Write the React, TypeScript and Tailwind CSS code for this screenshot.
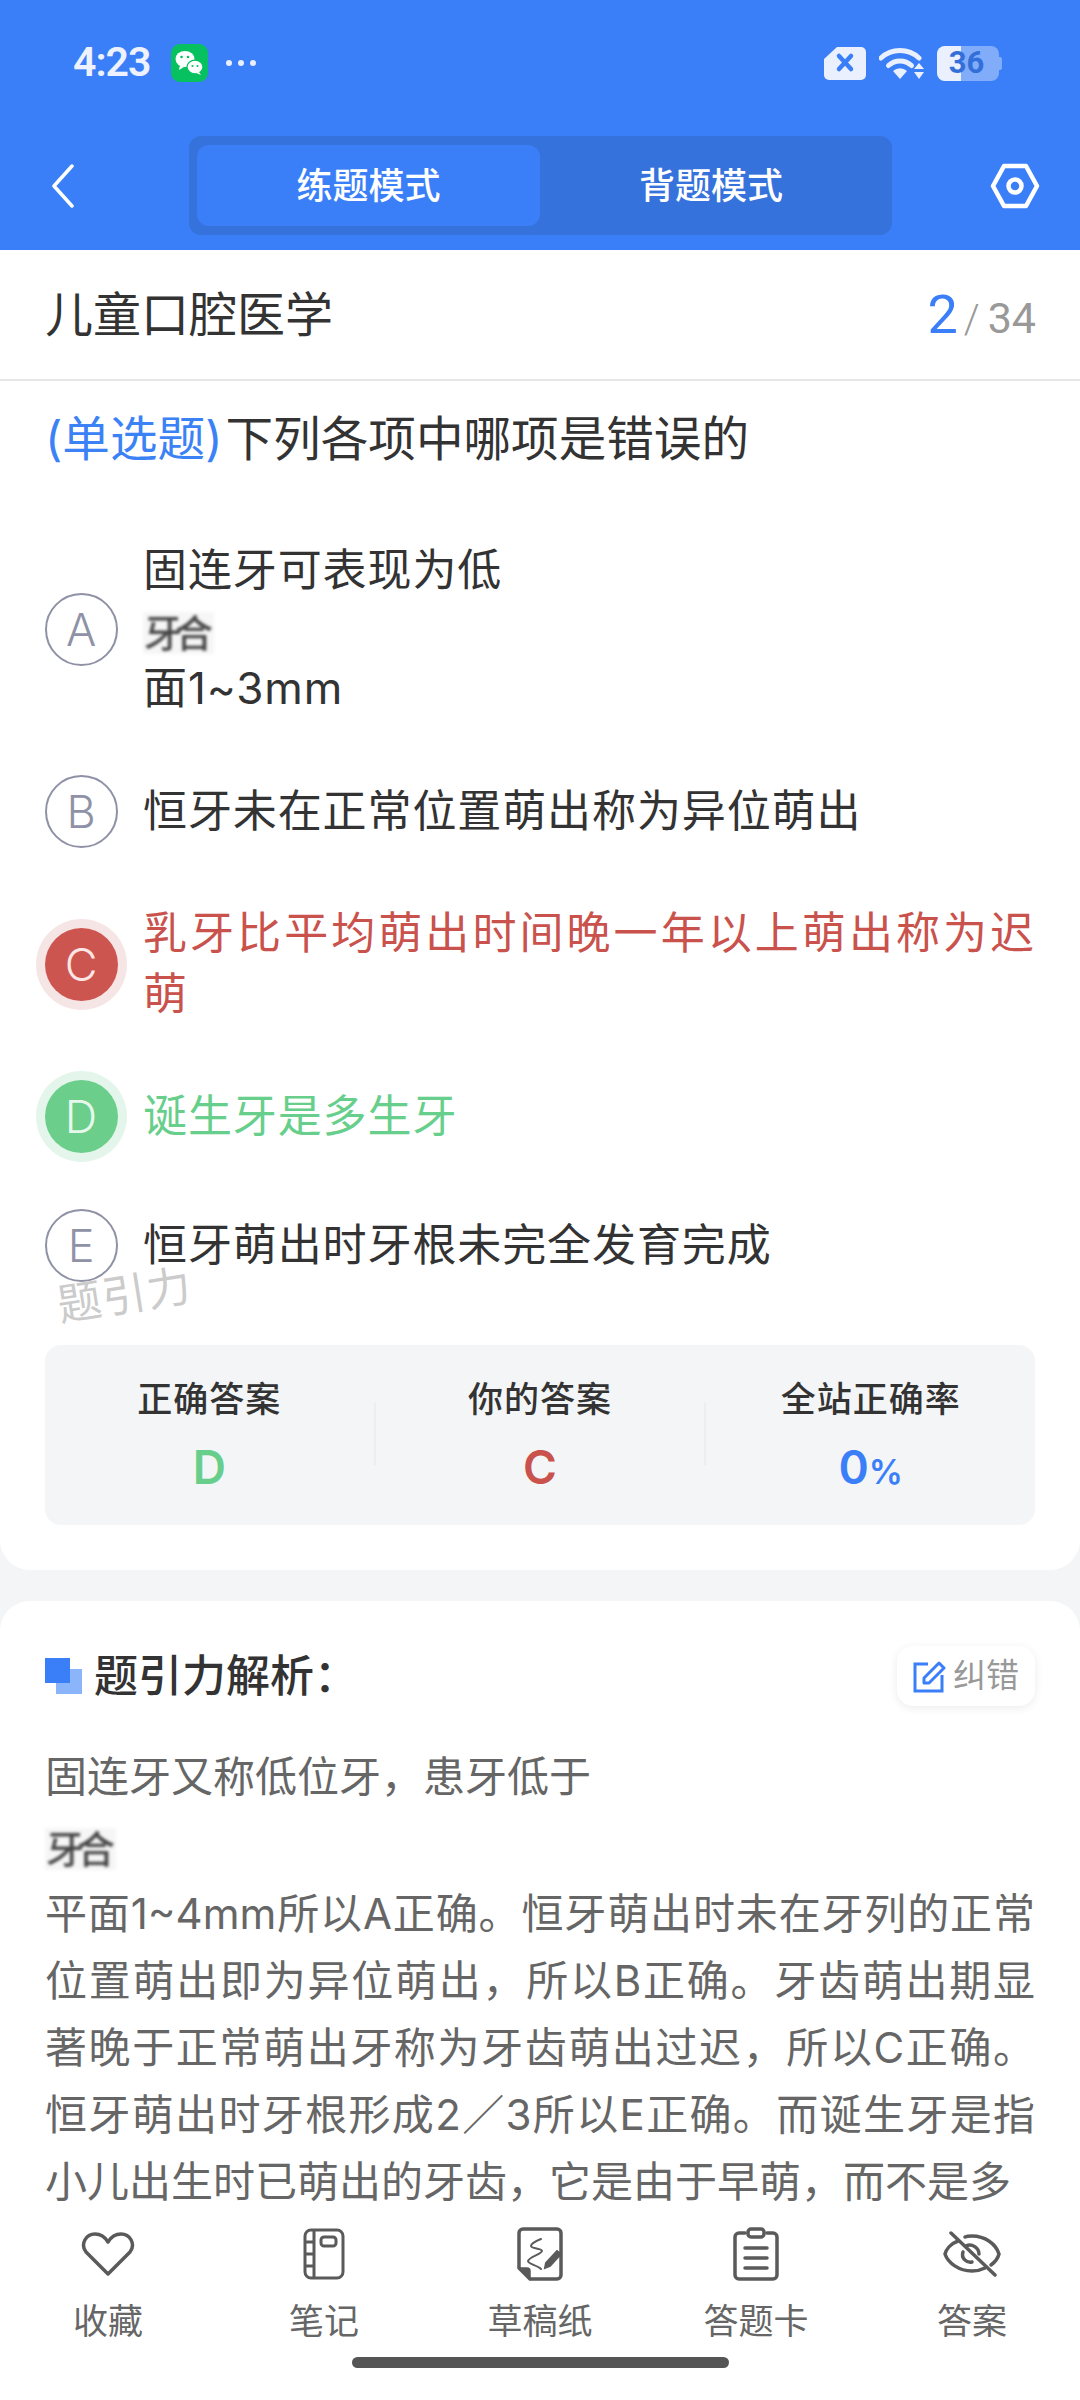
import React from "react";

const FONT = '"Inter", "Noto Sans CJK SC", sans-serif';
const ROBOTO = '"Roboto", "Noto Sans CJK SC", sans-serif';

function Blurred({ className }: { className: string }) {
  return (
    <div className={className}>
      <span className="inline-block blur-[1.4px] text-[38px] font-medium tracking-[-7px] text-[#444] bg-[#f6f6f6] pl-[1px] pr-[8px] leading-[42px]">牙合</span>
    </div>
  );
}

function Opt({ l, state, children, className }: { l: string; state?: "bad" | "good"; children: React.ReactNode; className: string }) {
  const circle =
    state === "bad"
      ? "bg-[#cd5550] text-[#fbe6e4] ring-[9px] ring-[#f6e5e5]"
      : state === "good"
      ? "bg-[#6bce8a] text-[#e6f8ec] ring-[9px] ring-[#e4f6ec]"
      : "border-2 border-[#8f92a6] text-[#8f92a6]";
  return (
    <div className={"flex items-center gap-[25px] " + className}>
      <div className={"w-[73px] h-[73px] shrink-0 rounded-full flex items-center justify-center text-[45px] font-light " + circle}>{l}</div>
      <div className="flex-1 min-w-0">{children}</div>
    </div>
  );
}

const Stat = ({ label, children }: { label: string; children: React.ReactNode }) => (
  <div className="flex-1 flex flex-col items-center">
    <div className="text-[35px] leading-[44px] font-medium tracking-[1px] text-[#333]">{label}</div>
    <div className="mt-[23px] leading-[46px] text-[46px] font-semibold">{children}</div>
  </div>
);

const Tool = ({ label, children }: { label: string; children: React.ReactNode }) => (
  <div className="flex-1 flex flex-col items-center">
    <div className="h-[56px] flex items-center justify-center">{children}</div>
    <div className="mt-[17px] text-[35px] leading-[44px] text-[#666]">{label}</div>
  </div>
);

export default function App() {
  return (
    <div className="relative w-[1080px] h-[2400px] overflow-hidden bg-[#f4f5f7] flex flex-col" style={{ fontFamily: FONT }}>
      {/* header */}
      <div className="h-[250px] bg-[#3b7ff8] shrink-0">
        <div className="h-[126px] flex items-center justify-between pl-[73px] pr-[78px]">
          <div className="flex items-center">
            <span className="text-[41px] font-semibold text-[#edf2fe] tracking-[-1px] w-[84px]" style={{ fontFamily: ROBOTO }}>4:23</span>
            <svg className="ml-[14px]" width="37" height="38" viewBox="0 0 37 38">
              <rect width="37" height="38" rx="9" fill="#07c160" />
              <ellipse cx="14" cy="15" rx="9.5" ry="8" fill="#fff" />
              <path d="M9 21l-1 5 5-3z" fill="#fff" />
              <ellipse cx="24" cy="23" rx="8" ry="6.8" fill="#fff" stroke="#07c160" strokeWidth="1.2" />
              <path d="M28 28l2 3-5-2z" fill="#fff" />
              <circle cx="10.5" cy="13" r="1.3" fill="#07c160" />
              <circle cx="17" cy="13" r="1.3" fill="#07c160" />
              <circle cx="21.5" cy="22" r="1.1" fill="#07c160" />
              <circle cx="26.5" cy="22" r="1.1" fill="#07c160" />
            </svg>
            <svg className="ml-[17px]" width="32" height="8" viewBox="0 0 32 8" fill="#e8effe">
              <circle cx="4" cy="4" r="3" /><circle cx="16" cy="4" r="3" /><circle cx="28" cy="4" r="3" />
            </svg>
          </div>
          <div className="flex items-center gap-[12px]">
            <svg width="44" height="35" viewBox="0 0 44 35">
              <path d="M14 1h24a5 5 0 0 1 5 5v23a5 5 0 0 1-5 5H6a5 5 0 0 1-5-5V13z" fill="#eaf0fe" />
              <path d="M16 10l12 13M28 10L16 23" stroke="#3b7ff8" strokeWidth="4.5" strokeLinecap="round" />
            </svg>
            <svg width="46" height="35" viewBox="0 0 46 35">
              <path d="M2 12a28 28 0 0 1 38 0" fill="none" stroke="#eaf0fe" strokeWidth="5" strokeLinecap="round" />
              <path d="M9.500 19.500a17 17 0 0 1 23 0" fill="none" stroke="#eaf0fe" strokeWidth="5" strokeLinecap="round" />
              <path d="M14 25a10 10 0 0 1 14 0l-7 8z" fill="#eaf0fe" />
              <path d="M40 17l5 6H35zM35 26h10l-5 7z" fill="#eaf0fe" />
            </svg>
            <div className="relative w-[65px] h-[35px]">
              <div className="absolute inset-y-0 left-0 w-[62px] rounded-[8px] bg-[#81acfa]" />
              <div className="absolute right-0 top-[11px] w-[4px] h-[13px] rounded-r-[2px] bg-[#81acfa]" />
              <div className="absolute inset-y-0 left-0 w-[24px] rounded-l-[8px] bg-[#eaf0fe]" />
              <div className="absolute inset-0 pr-[6px] flex items-center justify-center text-[31px] font-bold text-[#336fd8]" style={{ fontFamily: ROBOTO }}>36</div>
            </div>
          </div>
        </div>
        <div className="h-[99px] mt-[10px] flex items-center">
          <svg className="ml-[50px]" width="26" height="44" viewBox="0 0 26 44" fill="none" stroke="#fff" strokeWidth="3.500" strokeLinecap="round" strokeLinejoin="round">
            <path d="M22 2L4 22l18 20" />
          </svg>
          <div className="ml-[113px] w-[703px] h-[99px] rounded-[12px] bg-[#3672dc] flex items-center px-[8px] text-[36px] font-medium text-white">
            <div className="w-[343px] h-[81px] rounded-[12px] bg-[#3b7ff8] flex items-center justify-center">练题模式</div>
            <div className="flex-1 flex items-center justify-center pr-[2px]">背题模式</div>
          </div>
          <svg className="ml-[98px]" width="50" height="46" viewBox="0 0 50 46" fill="none" stroke="#fff" strokeWidth="4.500" strokeLinejoin="round">
            <path d="M14 3h22l11 20-11 20H14L3 23z" />
            <circle cx="25" cy="23" r="6.500" />
          </svg>
        </div>
      </div>

      <div className="flex-1 min-h-0 overflow-hidden">
        {/* card 1 */}
        <div className="bg-white rounded-b-[30px] h-[1320px] flex flex-col">
          <div className="h-[131px] border-b-2 border-[#e6e6e6] flex items-center justify-between pl-[45px] pr-[44px]">
            <span className="text-[48px] text-[#333] leading-[60px]">儿童口腔医学</span>
            <span className="flex items-baseline" style={{ fontFamily: ROBOTO }}>
              <span className="text-[54px] text-[#3b7ff8]">2</span>
              <span className="ml-[6px] text-[40px] text-[#999] font-light">/</span>
              <span className="ml-[8px] text-[43px] text-[#999]">34</span>
            </span>
          </div>
          <div className="relative px-[45px] pt-[28px] flex-1">
            <div className="text-[47.6px] leading-[60px] text-[#333]">
              <span className="text-[#3b82f6] mr-[3px]">(单选题)</span>下列各项中哪项是错误的
            </div>
            <div className="text-[44px] leading-[61px] tracking-[0.9px] text-justify text-[#333]">
              <Opt l="A" className="mt-[71px]">
                <div>固连牙可表现为低</div>
                <Blurred className="h-[57px] pt-[6px] flex items-center" />
                <div>面1~3mm</div>
              </Opt>
              <Opt l="B" className="mt-[56px]">恒牙未在正常位置萌出称为异位萌出</Opt>
              <Opt l="C" state="bad" className="mt-[55px] text-[#c9524d]">乳牙比平均萌出时间晚一年以上萌出称为迟萌</Opt>
              <Opt l="D" state="good" className="mt-[55px] text-[#67cf8b]">诞生牙是多生牙</Opt>
              <Opt l="E" className="mt-[56px]">恒牙萌出时牙根未完全发育完成</Opt>
            </div>
            <div className="mt-[63px] h-[180px] rounded-[16px] bg-[#f4f5f7] flex items-start pt-[32px] relative">
              <Stat label="正确答案"><span className="text-[#67cf8b]">D</span></Stat>
              <div className="w-[2px] h-[62px] mt-[26px] bg-[#eceef0]" />
              <Stat label="你的答案"><span className="text-[#c9524d]">C</span></Stat>
              <div className="w-[2px] h-[62px] mt-[26px] bg-[#eceef0]" />
              <Stat label="全站正确率">
                <span className="text-[#3b7ff8]">0<span className="text-[34px]">%</span></span>
              </Stat>
            </div>
            <div className="absolute left-[57px] top-[889px] -rotate-[9deg] text-[44px] leading-[50px] tracking-[1px] text-[#cbcbcb]">题引力</div>
          </div>
        </div>

        {/* card 2 */}
        <div className="bg-white rounded-t-[30px] mt-[31px] px-[45px] pt-[45px]">
          <div className="flex items-center justify-between h-[60px]">
            <div className="flex items-center">
              <div className="relative w-[37px] h-[36px]">
                <div className="absolute right-0 bottom-0 w-[26px] h-[25px] bg-[#8ab5fb]" />
                <div className="absolute left-0 top-0 w-[25px] h-[25px] bg-[#3b7ff8]" />
              </div>
              <span className="ml-[12px] text-[44px] font-medium text-[#333] leading-[60px]">题引力解析：</span>
            </div>
            <div className="w-[138px] h-[60px] rounded-[16px] bg-white shadow-[0_2px_10px_rgba(0,0,0,0.08)] flex items-center justify-center gap-[7px]">
              <svg width="33" height="33" viewBox="0 0 33 33" fill="none" stroke="#3b7ff8" strokeWidth="3">
                <path d="M15 4H2v27h27V15" />
                <path d="M11 18v5h5L31 8l-5-5z" strokeLinejoin="round" />
              </svg>
              <span className="text-[33px] text-[#999]">纠错</span>
            </div>
          </div>
          <div className="mt-[37px] text-[42px] leading-[67px] text-[#666] text-justify">
            <div>固连牙又称低位牙，患牙低于</div>
            <Blurred className="h-[70px] pt-[8px] flex items-center" />
            <div>平面1~4mm所以A正确。恒牙萌出时未在牙列的正常位置萌出即为异位萌出，所以B正确。牙齿萌出期显著晚于正常萌出牙称为牙齿萌出过迟，所以C正确。恒牙萌出时牙根形成2／3所以E正确。而诞生牙是指小儿出生时已萌出的牙齿，它是由于早萌，而不是多</div>
          </div>
        </div>
      </div>

      {/* bottom bar */}
      <div className="h-[188px] shrink-0 bg-white flex flex-col">
        <div className="flex pt-[14px]">
          <Tool label="收藏">
            <svg width="54" height="46" viewBox="0 0 54 46" fill="none" stroke="#5a5a5a" strokeWidth="3.500" strokeLinejoin="round">
              <path d="M27 43L5 21C-1 13 5 3 14 3c6 0 10 3 13 8 3-5 7-8 13-8 9 0 15 10 9 18z" />
            </svg>
          </Tool>
          <Tool label="笔记">
            <svg width="42" height="52" viewBox="0 0 42 52" fill="none" stroke="#5a5a5a" strokeWidth="3">
              <rect x="2" y="2" width="38" height="48" rx="6" />
              <path d="M11 2v48M2 14h9M2 26h9M2 38h9" />
              <rect x="18" y="9" width="15" height="9" rx="3" strokeWidth="3" />
            </svg>
          </Tool>
          <Tool label="草稿纸">
            <svg width="46" height="54" viewBox="0 0 46 54" fill="none" stroke="#5a5a5a" strokeWidth="3.500">
              <path d="M13 52h27a4 4 0 0 0 4-4V6a4 4 0 0 0-4-4H6a4 4 0 0 0-4 4v35z" strokeLinejoin="round" />
              <path d="M2 41h8a3 3 0 0 1 3 3v8z" fill="#5a5a5a" strokeWidth="1.500" />
              <path d="M24 12c-5 2-10 5-10 7 0 3 11 2 11 5 0 3-13 6-14 10 0 3 9 4 13 8" strokeWidth="2" strokeLinecap="round" />
              <path d="M29 36l-1 5 5-2 11-12-4-3z" fill="#5a5a5a" stroke="#5a5a5a" strokeWidth="2" />
            </svg>
          </Tool>
          <Tool label="答题卡">
            <svg width="46" height="54" viewBox="0 0 46 54" fill="none" stroke="#5a5a5a" strokeWidth="3.500" strokeLinecap="round">
              <path d="M12 6H6a4 4 0 0 0-4 4v38a4 4 0 0 0 4 4h34a4 4 0 0 0 4-4V10a4 4 0 0 0-4-4h-6" />
              <rect x="15" y="2" width="16" height="8" rx="3" />
              <path d="M12 21h22M12 31h22M12 41h22" />
            </svg>
          </Tool>
          <Tool label="答案">
            <svg width="58" height="46" viewBox="0 0 58 46" fill="none" stroke="#5a5a5a" strokeWidth="3.500" strokeLinecap="round">
              <path d="M15 10C7 13 3 19 2 23c3 9 14 17 27 17 5 0 9-1 13-3M22 6c2-1 5-1 7-1 13 0 24 8 27 18-1 4-4 8-8 11" />
              <path d="M20 21c-2 6 3 11 9 10M23 15c6-3 13 2 13 8" />
              <path d="M8 2l44 42" />
            </svg>
          </Tool>
        </div>
        <div className="mt-[14px] self-center w-[377px] h-[11px] rounded-full bg-[#555]" />
      </div>
    </div>
  );
}
